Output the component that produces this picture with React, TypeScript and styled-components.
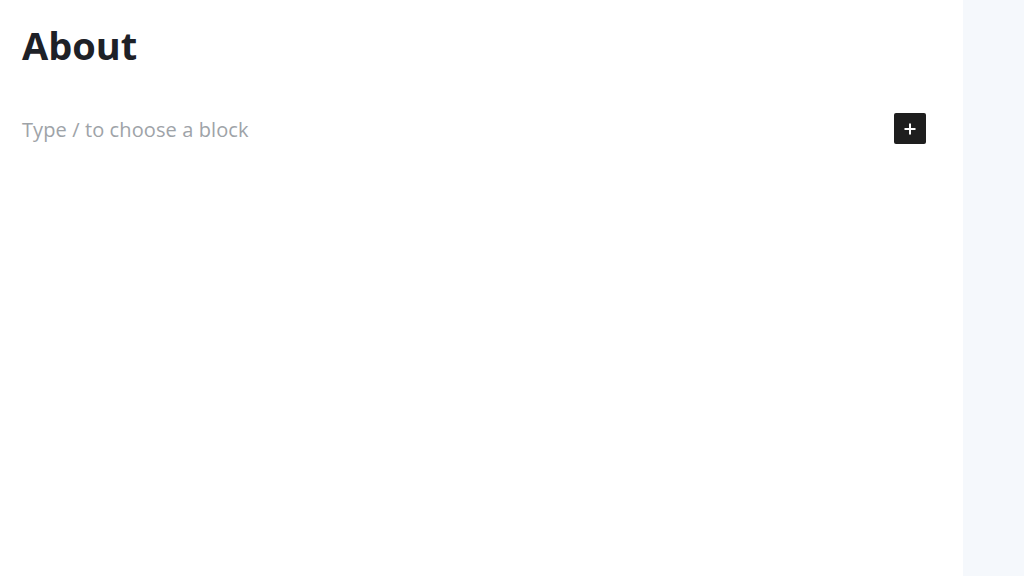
import React from 'react';
import styled, {createGlobalStyle} from 'styled-components';

const GlobalStyle = createGlobalStyle`
  html, body {
    margin: 0;
    padding: 0;
    height: 100%;
    background: #ffffff;
  }
  #root {
    height: 100%;
  }
`

const Layout = styled('div')`
  display: flex;
  width: 100vw;
  height: 100vh;
  font-family: "Open Sans", "Noto Sans", sans-serif;
  overflow: hidden;
`
const Editor = styled('main')`
  flex: 1;
  padding: 19px 37px 0 22px;
  background: #ffffff;
`
const Sidebar = styled('aside')`
  width: 61px;
  background: #f5f8fc;
`
const Title = styled('h1')`
  margin: 0;
  font-size: 38px;
  line-height: 52px;
  font-weight: 700;
  color: #1e2127;
`
const BlockRow = styled('div')`
  display: flex;
  justify-content: space-between;
  align-items: flex-start;
  margin-top: 42px;
`
const Placeholder = styled('div')`
  font-size: 20px;
  line-height: 28px;
  color: #9ea3a8;
  letter-spacing: 0.1px;
  margin-top: 3px;
`
const AddButton = styled('button')`
  width: 32px;
  height: 31px;
  border: none;
  border-radius: 2px;
  padding: 0;
  background: #1e1e1e;
  display: flex;
  align-items: center;
  justify-content: center;
  cursor: pointer;
`

const App = () => {
    return (
        <>
            <GlobalStyle/>
            <Layout>
                <Editor>
                    <Title>About</Title>
                    <BlockRow>
                        <Placeholder>Type / to choose a block</Placeholder>
                        <AddButton aria-label="Add block">
                            <svg width="16" height="16" viewBox="0 0 16 16">
                                <path d="M8 2.5v11M2.5 8h11" stroke="#ffffff" strokeWidth="2"/>
                            </svg>
                        </AddButton>
                    </BlockRow>
                </Editor>
                <Sidebar/>
            </Layout>
        </>
    );
};

export default App;
